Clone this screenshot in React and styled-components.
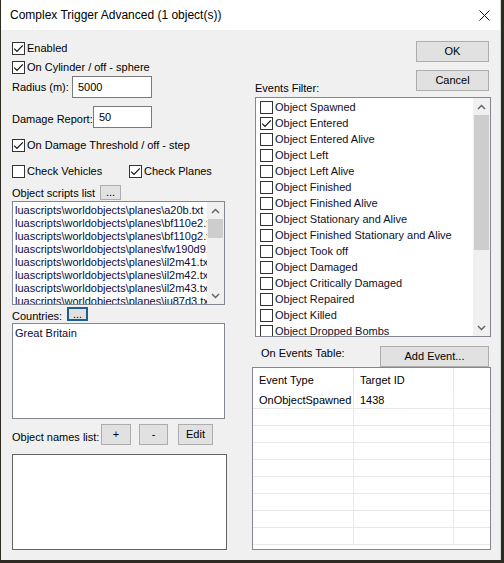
import React from "react";
import styled, { createGlobalStyle } from "styled-components";

const GlobalStyle = createGlobalStyle`
  body {
    margin: 0;
    background: #2e2b22;
    font-family: "Liberation Sans", Arial, sans-serif;
    font-size: 11px;
    color: #000;
  }
`;

const Window = styled.div`
  width: 499px;
  height: 560px;
  margin-left: 1px;
  background: #f0f0f0;
  border-right: 1px solid #d9d9d9;
  display: flex;
  flex-direction: column;
  overflow: hidden;
`;

const TitleBar = styled.div`
  height: 30px;
  flex: none;
  background: #fff;
  display: flex;
  align-items: center;
  justify-content: space-between;
  padding: 0 10px 0 9px;
  font-size: 12px;
`;

const Body = styled.div`
  display: grid;
  grid-template-columns: 215px 239px;
  column-gap: 25px;
  padding-left: 11px;
`;

const Column = styled.div`
  display: flex;
  flex-direction: column;
`;

const Row = styled.div`
  display: flex;
  align-items: center;
  height: ${(p) => p.$h || 16}px;
  margin-top: ${(p) => p.$mt || 0}px;
  flex: none;
`;

const Label = styled.span`
  display: inline-block;
  width: ${(p) => (p.$w ? `${p.$w}px` : "auto")};
  padding-top: ${(p) => p.$dy || 0}px;
  margin-left: ${(p) => p.$ml || 0}px;
  white-space: nowrap;
  flex: none;
`;

const CheckLabel = styled.label`
  display: flex;
  align-items: center;
  gap: 2px;
  width: ${(p) => (p.$w ? `${p.$w}px` : "auto")};
  white-space: nowrap;
  flex: none;
`;

const Box = styled.span`
  width: 13px;
  height: 13px;
  box-sizing: border-box;
  border: 1px solid #333;
  background: #fff;
  display: inline-flex;
  align-items: center;
  justify-content: center;
  flex: none;
`;

const TextInput = styled.div`
  box-sizing: border-box;
  width: ${(p) => p.$w}px;
  height: 22px;
  border: 1px solid #7a7a7a;
  background: #fff;
  padding-left: 5px;
  display: flex;
  align-items: center;
`;

const Button = styled.div`
  box-sizing: border-box;
  width: ${(p) => p.$w}px;
  height: ${(p) => p.$h || 21}px;
  margin-left: ${(p) => p.$ml || 0}px;
  margin-right: ${(p) => p.$mr || 0}px;
  background: #e1e1e1;
  border: ${(p) => (p.$focus ? "2px solid #1f5f8b" : "1px solid #adadad")};
  display: flex;
  align-items: center;
  justify-content: center;
  line-height: 1;
  flex: none;
`;

const ListBox = styled.div`
  box-sizing: border-box;
  width: ${(p) => p.$w}px;
  height: ${(p) => p.$h}px;
  margin-top: ${(p) => p.$mt || 0}px;
  margin-left: ${(p) => p.$ml || 0}px;
  border: 1px solid ${(p) => p.$border || "#828790"};
  background: #fff;
  display: flex;
  flex: none;
  overflow: hidden;
`;

const Items = styled.div`
  flex: 1;
  min-width: 0;
  padding: ${(p) => p.$pad || "2px 0 0 2px"};
  overflow: hidden;
`;

const TextLine = styled.div`
  height: 13px;
  line-height: 13px;
  white-space: nowrap;
  overflow: hidden;
  color: #0c0c3a;
`;

const EventItem = styled.div`
  height: 16px;
  display: flex;
  align-items: center;
  gap: 2px;
  white-space: nowrap;
  color: #10102a;
`;

const ScrollBar = styled.div`
  width: 17px;
  flex: none;
  background: #f0f0f0;
  display: flex;
  flex-direction: column;
`;

const ScrollArrow = styled.div`
  height: 17px;
  flex: none;
  display: flex;
  align-items: center;
  justify-content: center;
`;

const ScrollTrack = styled.div`
  flex: 1;
  display: flex;
  flex-direction: column;
`;

const Thumb = styled.div`
  height: ${(p) => p.$h}px;
  margin: 0 1px;
  background: #cdcdcd;
`;

const ButtonStack = styled.div`
  display: flex;
  flex-direction: column;
  gap: 8px;
  margin: 12px 2px 6px 0;
`;

const FilterHeader = styled.div`
  display: flex;
  justify-content: space-between;
  align-items: flex-end;
  height: 67px;
`;

const TableHeaderRow = styled.div`
  display: flex;
  justify-content: space-between;
  align-items: flex-start;
  margin-top: 9px;
  height: 21px;
`;

const Table = styled.div`
  box-sizing: border-box;
  width: 239px;
  height: 183px;
  border: 1px solid #828790;
  background: #fff;
  overflow: hidden;
`;

const TableRow = styled.div`
  display: grid;
  grid-template-columns: 101px 100px 1fr;
  height: ${(p) => p.$h}px;
  box-sizing: border-box;
  border-bottom: ${(p) => (p.$head ? "none" : "1px solid #e8e8e8")};
`;

const Cell = styled.div`
  display: flex;
  align-items: center;
  padding-left: 6px;
  padding-bottom: ${(p) => (p.$head ? 1 : 0)}px;
  border-right: 1px solid ${(p) => (p.$head ? "#e5e5e5" : "#eaeaea")};
  white-space: nowrap;
  overflow: hidden;
  &:last-child {
    border-right: none;
  }
`;

const CheckMark = () => (
  <svg width="11" height="11" viewBox="0 0 11 11">
    <polyline points="1.2,5.6 4,8.4 9.8,2.4" fill="none" stroke="#111" strokeWidth="1.2" />
  </svg>
);

const Checkbox = ({ checked, children, w }) => (
  <CheckLabel $w={w}>
    <Box>{checked && <CheckMark />}</Box>
    {children}
  </CheckLabel>
);

const Chevron = ({ down }) => (
  <svg width="9" height="6" viewBox="0 0 9 6">
    <polyline
      points={down ? "1,1 4.5,4.5 8,1" : "1,5 4.5,1.5 8,5"}
      fill="none"
      stroke="#606060"
      strokeWidth="1.4"
    />
  </svg>
);

const VScroll = ({ thumbTop, thumbH }) => (
  <ScrollBar>
    <ScrollArrow>
      <Chevron />
    </ScrollArrow>
    <ScrollTrack>
      <div style={{ height: thumbTop }} />
      <Thumb $h={thumbH} />
    </ScrollTrack>
    <ScrollArrow>
      <Chevron down />
    </ScrollArrow>
  </ScrollBar>
);

const scripts = [
  "a20b.txt",
  "bf110e2.txt",
  "bf110g2.txt",
  "fw190d9.txt",
  "il2m41.txt",
  "il2m42.txt",
  "il2m43.txt",
  "ju87d3.txt",
].map((f) => `luascripts\\worldobjects\\planes\\${f}`);

const events = [
  "Object Spawned",
  "Object Entered",
  "Object Entered Alive",
  "Object Left",
  "Object Left Alive",
  "Object Finished",
  "Object Finished Alive",
  "Object Stationary and Alive",
  "Object Finished Stationary and Alive",
  "Object Took off",
  "Object Damaged",
  "Object Critically Damaged",
  "Object Repaired",
  "Object Killed",
  "Object Dropped Bombs",
];

const rows = [["OnObjectSpawned", "1438"], ...Array(8).fill(["", ""])];

export default function App() {
  return (
    <>
      <GlobalStyle />
      <Window>
        <TitleBar>
          <span>Complex Trigger Advanced (1 object(s))</span>
          <svg width="11" height="11" viewBox="0 0 11 11">
            <path d="M0.5 0.5 L10.5 10.5 M10.5 0.5 L0.5 10.5" stroke="#111" strokeWidth="1" />
          </svg>
        </TitleBar>
        <Body>
          <Column>
            <Row $mt={10}>
              <Checkbox checked>Enabled</Checkbox>
            </Row>
            <Row $mt={3}>
              <Checkbox checked>On Cylinder / off - sphere</Checkbox>
            </Row>
            <Row $mt={1} $h={22}>
              <Label $w={60}>Radius (m):</Label>
              <TextInput $w={80}>5000</TextInput>
            </Row>
            <Row $mt={8} $h={22}>
              <Label $w={81} $dy={4}>
                Damage Report:
              </Label>
              <TextInput $w={59}>50</TextInput>
            </Row>
            <Row $mt={9}>
              <Checkbox checked>On Damage Threshold / off - step</Checkbox>
            </Row>
            <Row $mt={10}>
              <Checkbox w={117}>Check Vehicles</Checkbox>
              <Checkbox checked>Check Planes</Checkbox>
            </Row>
            <Row $mt={6} $h={15}>
              <Label $w={88}>Object scripts list</Label>
              <Button $w={21} $h={15}>
                ...
              </Button>
            </Row>
            <ListBox $w={213} $h={104} $mt={1}>
              <Items>
                {scripts.map((s) => (
                  <TextLine key={s}>{s}</TextLine>
                ))}
              </Items>
              <VScroll thumbTop={0} thumbH={19} />
            </ListBox>
            <Row $mt={2} $h={14}>
              <Label $w={55} $dy={3}>
                Countries:
              </Label>
              <Button $w={21} $h={14} $focus>
                ...
              </Button>
            </Row>
            <ListBox $w={213} $h={96} $mt={2}>
              <Items $pad="3px 0 0 2px">
                <TextLine>Great Britain</TextLine>
              </Items>
            </ListBox>
            <Row $mt={5} $h={21}>
              <Label $w={89} $dy={4}>
                Object names list:
              </Label>
              <Button $w={30}>+</Button>
              <Button $w={29} $ml={8}>
                -
              </Button>
              <Button $w={35} $ml={10}>
                Edit
              </Button>
            </Row>
            <ListBox $w={215} $h={96} $mt={9} $border="#646464" />
          </Column>

          <Column>
            <FilterHeader>
              <Label $ml={3} style={{ marginBottom: 3 }}>
                Events Filter:
              </Label>
              <ButtonStack>
                <Button $w={73}>OK</Button>
                <Button $w={73}>Cancel</Button>
              </ButtonStack>
            </FilterHeader>
            <ListBox $w={236} $h={240} $ml={3}>
              <Items $pad="1px 0 0 4px">
                {events.map((e, i) => (
                  <EventItem key={e}>
                    <Box>{i === 1 && <CheckMark />}</Box>
                    {e}
                  </EventItem>
                ))}
              </Items>
              <VScroll thumbTop={0} thumbH={135} />
            </ListBox>
            <TableHeaderRow>
              <Label $ml={9} $dy={1}>
                On Events Table:
              </Label>
              <Button $w={109} $mr={2}>
                Add Event...
              </Button>
            </TableHeaderRow>
            <Table>
              <TableRow $h={24} $head>
                <Cell $head>Event Type</Cell>
                <Cell $head>Target ID</Cell>
                <Cell $head />
              </TableRow>
              {rows.map((r, i) => (
                <TableRow key={i} $h={17}>
                  <Cell>{r[0]}</Cell>
                  <Cell>{r[1]}</Cell>
                  <Cell />
                </TableRow>
              ))}
            </Table>
          </Column>
        </Body>
      </Window>
    </>
  );
}
